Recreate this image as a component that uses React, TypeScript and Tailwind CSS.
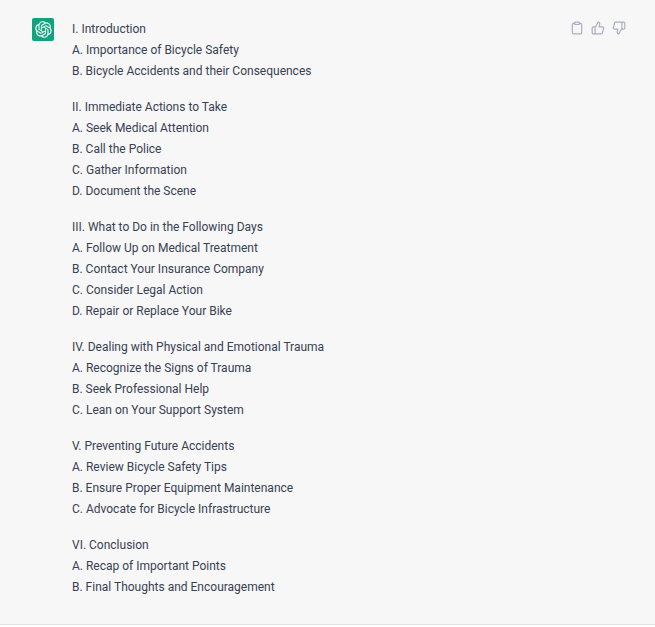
import React from 'react';
import { ThumbsUp, ThumbsDown, Clipboard } from 'lucide-react';

const sections: string[][] = [
  ['I. Introduction', 'A. Importance of Bicycle Safety', 'B. Bicycle Accidents and their Consequences'],
  ['II. Immediate Actions to Take', 'A. Seek Medical Attention', 'B. Call the Police', 'C. Gather Information', 'D. Document the Scene'],
  ['III. What to Do in the Following Days', 'A. Follow Up on Medical Treatment', 'B. Contact Your Insurance Company', 'C. Consider Legal Action', 'D. Repair or Replace Your Bike'],
  ['IV. Dealing with Physical and Emotional Trauma', 'A. Recognize the Signs of Trauma', 'B. Seek Professional Help', 'C. Lean on Your Support System'],
  ['V. Preventing Future Accidents', 'A. Review Bicycle Safety Tips', 'B. Ensure Proper Equipment Maintenance', 'C. Advocate for Bicycle Infrastructure'],
  ['VI. Conclusion', 'A. Recap of Important Points', 'B. Final Thoughts and Encouragement'],
];

const Logo: React.FC = () => (
  <div className="w-[22px] h-[23px] bg-[#10a37f] rounded-[2px] flex items-center justify-center shrink-0">
    <svg width="17" height="17" viewBox="0 0 41 41" fill="none">
      <path
        fill="#ffffff"
        d="M37.5324 16.8707C37.9808 15.5241 38.1363 14.0974 37.9886 12.6859C37.8409 11.2744 37.3934 9.91076 36.676 8.68622C35.6126 6.83404 33.9882 5.3676 32.0373 4.4985C30.0864 3.62941 27.9098 3.40259 25.8215 3.85078C24.8796 2.7893 23.7219 1.94125 22.4257 1.36341C21.1295 0.785575 19.7249 0.491269 18.3058 0.500197C16.1708 0.495044 14.0893 1.16803 12.3614 2.42214C10.6335 3.67624 9.34853 5.44666 8.6917 7.47815C7.30085 7.76286 5.98686 8.3414 4.8377 9.17505C3.68854 10.0087 2.73073 11.0782 2.02839 12.312C0.956464 14.1591 0.498905 16.2988 0.721698 18.4228C0.944492 20.5467 1.83612 22.5449 3.268 24.1293C2.81966 25.4759 2.66413 26.9026 2.81182 28.3141C2.95951 29.7256 3.40701 31.0892 4.12437 32.3138C5.18791 34.1659 6.8123 35.6322 8.76321 36.5013C10.7141 37.3704 12.8907 37.5973 14.9789 37.1492C15.9208 38.2107 17.0786 39.0587 18.3747 39.6366C19.6709 40.2144 21.0755 40.5087 22.4946 40.4998C24.6307 40.5054 26.7133 39.8321 28.4418 38.5772C30.1704 37.3223 31.4556 35.5506 32.1119 33.5179C33.5027 33.2332 34.8167 32.6547 35.9659 31.821C37.115 30.9874 38.0728 29.9178 38.7752 28.684C39.8458 26.8371 40.3023 24.6979 40.0789 22.5748C39.8556 20.4517 38.9639 18.4544 37.5324 16.8707ZM22.4978 37.8849C20.7443 37.8874 19.0459 37.2733 17.6994 36.1501C17.7601 36.117 17.8666 36.0586 17.936 36.0161L25.9004 31.4156C26.1003 31.3019 26.2663 31.137 26.3813 30.9378C26.4964 30.7386 26.5563 30.5124 26.5549 30.2825V19.0542L29.9213 20.998C29.9389 21.0068 29.9541 21.0198 29.9656 21.0359C29.977 21.052 29.9842 21.0707 29.9867 21.0902V30.3889C29.9842 32.375 29.1946 34.2791 27.7909 35.6841C26.3872 37.0892 24.4838 37.8806 22.4978 37.8849ZM6.39227 31.0064C5.51397 29.4888 5.19742 27.7107 5.49804 25.9832C5.55718 26.0187 5.66048 26.0818 5.73461 26.1244L13.699 30.7248C13.8975 30.8408 14.1233 30.902 14.3532 30.902C14.583 30.902 14.8088 30.8408 15.0073 30.7248L24.731 25.1103V28.9979C24.7321 29.0177 24.7283 29.0376 24.7199 29.0556C24.7115 29.0736 24.6988 29.0893 24.6829 29.1012L16.6317 33.7497C14.9096 34.7416 12.8643 35.0097 10.9447 34.4954C9.02506 33.9811 7.38785 32.7263 6.39227 31.0064ZM4.29707 13.6194C5.17156 12.0998 6.55279 10.9364 8.19885 10.3327C8.19885 10.4013 8.19491 10.5228 8.19491 10.6071V19.808C8.19351 20.0378 8.25334 20.2638 8.36823 20.4629C8.48312 20.6619 8.64893 20.8267 8.84863 20.9404L18.5723 26.5542L15.206 28.4979C15.1894 28.5089 15.1703 28.5155 15.1505 28.5173C15.1307 28.5191 15.1107 28.516 15.0924 28.5082L7.04046 23.8557C5.32135 22.8601 4.06716 21.2235 3.55289 19.3046C3.03862 17.3858 3.30624 15.3413 4.29707 13.6194ZM31.955 20.0556L22.2312 14.4411L25.5976 12.4981C25.6142 12.4872 25.6333 12.4805 25.6531 12.4787C25.6729 12.4769 25.6928 12.4801 25.7111 12.4879L33.7631 17.1364C34.9967 17.849 36.0017 18.8982 36.6606 20.1613C37.3194 21.4244 37.6047 22.849 37.4832 24.2684C37.3617 25.6878 36.8382 27.0432 35.9743 28.1759C35.1103 29.3086 33.9415 30.1717 32.6047 30.6641C32.6047 30.5947 32.6047 30.4733 32.6047 30.3889V21.188C32.6066 20.9586 32.5474 20.7328 32.4332 20.5338C32.319 20.3348 32.154 20.1698 31.955 20.0556ZM35.3055 15.0128C35.2464 14.9765 35.1431 14.9142 35.069 14.8717L27.1045 10.2712C26.906 10.1554 26.6803 10.0943 26.4504 10.0943C26.2206 10.0943 25.9948 10.1554 25.7963 10.2712L16.0726 15.8858V11.9982C16.0715 11.9783 16.0753 11.9585 16.0837 11.9405C16.0921 11.9225 16.1048 11.9068 16.1207 11.8949L24.1719 7.25025C25.4053 6.53903 26.8158 6.19376 28.2383 6.25482C29.6608 6.31589 31.0364 6.78077 32.2044 7.59508C33.3723 8.40939 34.2842 9.53945 34.8334 10.8531C35.3826 12.1667 35.5464 13.6095 35.3055 15.0128ZM14.2424 21.9419L10.8752 19.9981C10.8576 19.9893 10.8423 19.9763 10.8309 19.9602C10.8195 19.9441 10.8122 19.9254 10.8098 19.9058V10.6071C10.8107 9.18295 11.2173 7.78848 11.9819 6.58696C12.7466 5.38544 13.8377 4.42659 15.1275 3.82264C16.4173 3.21869 17.8524 2.99464 19.2649 3.1767C20.6775 3.35876 22.0089 3.93941 23.1034 4.85067C23.0427 4.88379 22.937 4.94215 22.8668 4.98473L14.9024 9.58517C14.7025 9.69878 14.5366 9.86356 14.4215 10.0626C14.3065 10.2616 14.2466 10.4877 14.2479 10.7175L14.2424 21.9419ZM16.071 17.9991L20.4018 15.4978L24.7325 17.9975V22.9985L20.4018 25.4983L16.071 22.9985V17.9991Z"
      />
    </svg>
  </div>
);

const App: React.FC = () => {
  return (
    <div className="h-[627px] bg-white font-['Roboto',sans-serif]">
      <div className="h-[625px] bg-[#f7f7f8] border-b border-[#e2e2e4] pl-8 pr-[29px] pt-[18px] flex">
        <Logo />
        <div className="ml-[18px] pt-px flex-1 flex flex-col gap-[15px] text-[12px] leading-[21px] text-[#374151]">
          {sections.map((lines, i) => (
            <div key={i}>
              {lines.map(line => (
                <p key={line}>{line}</p>
              ))}
            </div>
          ))}
        </div>
        <div className="flex gap-[7px] h-4 text-[#acacbe] mt-[3px]">
          <Clipboard size={14} />
          <ThumbsUp size={14} />
          <ThumbsDown size={14} />
        </div>
      </div>
    </div>
  );
};

export default App;
